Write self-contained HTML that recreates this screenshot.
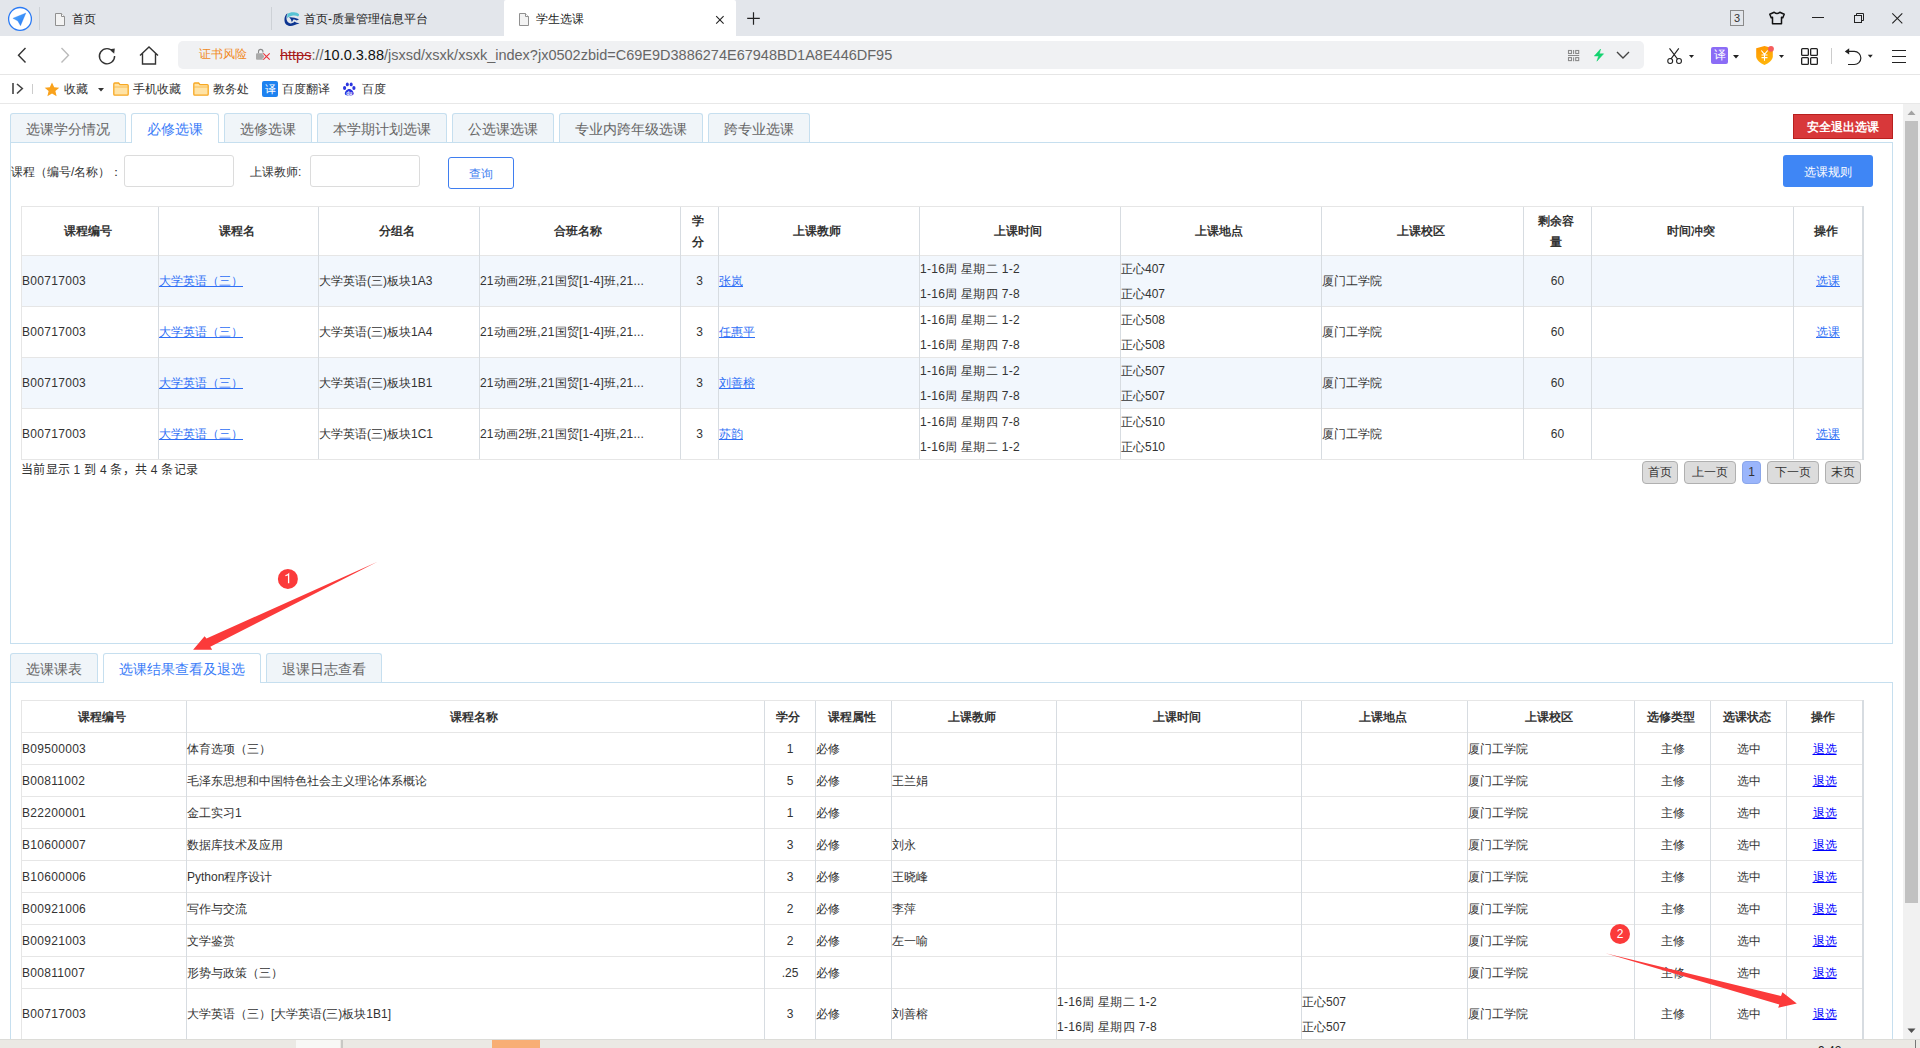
<!DOCTYPE html>
<html><head><meta charset="utf-8">
<style>
*{box-sizing:border-box;margin:0;padding:0}
html,body{width:1920px;height:1048px;overflow:hidden}
body{text-spacing-trim:space-all;position:relative;font-family:"Liberation Sans",sans-serif;font-size:12px;color:#333;background:#fff}
.a{position:absolute}
svg{position:absolute;overflow:visible}
.t{position:absolute;white-space:nowrap;line-height:1}
</style></head><body>
<!-- ===== TAB STRIP ===== -->
<div class="a" style="left:0;top:0;width:1920px;height:36px;background:#e3e6eb"></div>
<!-- browser logo -->
<svg style="left:0;top:0" width="40" height="36">
<defs><linearGradient id="lg1" x1="0" y1="0" x2="1" y2="1"><stop offset="0" stop-color="#55b0ff"/><stop offset="1" stop-color="#2474f2"/></linearGradient></defs>
<circle cx="20" cy="18.9" r="11.4" fill="#fff" stroke="#2a7af4" stroke-width="1.3"/>
<path d="M12.9 18.3 L25.9 13 L20.5 25.8 L17.8 20.9 Z" fill="url(#lg1)" stroke="#2a7af4" stroke-width="0.3" stroke-linejoin="round"/>
</svg>
<div class="a" style="left:39px;top:7px;width:1px;height:23px;background:#cdd1d6"></div>
<!-- tab1 -->
<svg style="left:54px;top:13px" width="14" height="14"><path d="M1.5 0.5 H7.5 L10.5 3.5 V12.5 H1.5 Z" fill="#f3f3f3" stroke="#909090" stroke-width="1"/><path d="M7.5 0.5 V3.5 H10.5" fill="#fff" stroke="#909090" stroke-width="1"/></svg>
<div class="t" style="left:72px;top:13px;font-size:12px;color:#222">首页</div>
<div class="a" style="left:271px;top:7px;width:1px;height:23px;background:#cdd1d6"></div>
<!-- tab2 -->
<svg style="left:280px;top:6px" width="24" height="24">
<path d="M7.5 7.8 C9 6.6 11.5 6 14 6.2 C16 6.3 18 7 19 8.2 C19.2 9.2 18.8 10 18 10.4 C16.5 9.6 14.5 9.2 12 9.8 C10 10.2 8 11 7 12.5 Z" fill="#58c3d4"/>
<path d="M7.5 7.2 C3.8 9.5 3.5 16.5 6.5 18.8 C9 20.5 12 20.3 14 19.3 C15.8 18.5 17.5 18 19.5 17.6 C17.5 17 15.8 16.6 14.6 15.6 L13.6 16.6 C11.5 18 8.6 17.6 7.4 15.6 C6 13 6.3 10 7.5 7.2 Z" fill="#0d3591"/>
<path d="M9 11.3 C12.5 11 15.5 12 19 13.3 L16.8 14.6 C15.3 14 14.3 13.5 13.3 13.6 C12.8 14.6 12.3 15.5 11.8 16.2 C11.6 14.6 10.6 12.6 9 11.3 Z" fill="#0d3591"/>
</svg>
<div class="t" style="left:304px;top:13px;font-size:12px;color:#222">首页-质量管理信息平台</div>
<!-- active tab -->
<div class="a" style="left:504px;top:0;width:232px;height:36px;background:#fff;border-radius:2px 2px 0 0"></div>
<svg style="left:518px;top:13px" width="14" height="14"><path d="M1.5 0.5 H7.5 L10.5 3.5 V12.5 H1.5 Z" fill="#f3f3f3" stroke="#909090" stroke-width="1"/><path d="M7.5 0.5 V3.5 H10.5" fill="#fff" stroke="#909090" stroke-width="1"/></svg>
<div class="t" style="left:536px;top:13px;font-size:12px;color:#222">学生选课</div>
<svg style="left:715px;top:15px" width="10" height="10"><path d="M1.2 1.2 L8.6 8.6 M8.6 1.2 L1.2 8.6" stroke="#222" stroke-width="1.1"/></svg>
<svg style="left:747px;top:12px" width="14" height="14"><path d="M6.5 0.3 V12.7 M0.2 6.3 H12.8" stroke="#222" stroke-width="1.2"/></svg>
<!-- window controls -->
<div class="a" style="left:1730px;top:10px;width:14px;height:16px;border:1px solid #8a8a8a;font-size:11px;line-height:14px;text-align:center;color:#333">3</div>
<svg style="left:1769px;top:11px" width="17" height="14"><path d="M5.2 1.2 Q8 3.8 10.8 1.2 L15.2 3.2 L13.8 6.8 L12.5 6.3 V12.8 H3.5 V6.3 L2.2 6.8 L0.8 3.2 Z" fill="none" stroke="#111" stroke-width="1.5" stroke-linejoin="round"/></svg>
<div class="a" style="left:1812px;top:17px;width:12px;height:1px;background:#222"></div>
<svg style="left:1853px;top:12px" width="12" height="12"><rect x="1.5" y="3.5" width="7" height="7" fill="none" stroke="#222"/><path d="M3.5 3 V1.5 H10.5 V8.5 H9" fill="none" stroke="#222"/></svg>
<svg style="left:1892px;top:13px" width="11" height="11"><path d="M0.3 0.3 L10.3 10.3 M10.3 0.3 L0.3 10.3" stroke="#222" stroke-width="1.1"/></svg>

<!-- ===== ADDRESS BAR ===== -->
<div class="a" style="left:0;top:36px;width:1920px;height:39px;background:#fff;border-bottom:1px solid #e6e6e6"></div>
<svg style="left:17px;top:47px" width="10" height="17"><path d="M8.5 1 L1.5 8.2 L8.5 15.5" fill="none" stroke="#333" stroke-width="1.4"/></svg>
<svg style="left:60px;top:47px" width="10" height="17"><path d="M1.5 1 L8.5 8.2 L1.5 15.5" fill="none" stroke="#bbb" stroke-width="1.4"/></svg>
<svg style="left:98px;top:47px" width="18" height="18"><path d="M15.2 4.8 A7.6 7.6 0 1 0 16.6 9" fill="none" stroke="#333" stroke-width="1.4"/><path d="M11.6 2.2 L16.8 1.6 L16.2 6.8 Z" fill="#333"/></svg>
<svg style="left:139px;top:46px" width="20" height="19"><path d="M1 9.5 L10 1 L19 9.5 M3.5 7.5 V18 H16.5 V7.5" fill="none" stroke="#333" stroke-width="1.4" stroke-linejoin="miter"/></svg>
<div class="a" style="left:178px;top:41px;width:1466px;height:28px;background:#f0f1f3;border-radius:5px"></div>
<div class="t" style="left:199px;top:48px;font-size:12px;color:#f08a24">证书风险</div>
<svg style="left:255px;top:48px" width="17" height="14"><path d="M3.5 5.5 V3.6 A2.2 2.2 0 0 1 7.9 3.6 V4.6" fill="none" stroke="#8c8c8c" stroke-width="1.1"/><rect x="1" y="5.2" width="8" height="6.6" rx="1" fill="#aaa"/><path d="M8.3 5.3 L14.7 11.7 M14.7 5.3 L8.3 11.7" stroke="#f0f1f3" stroke-width="2.6"/><path d="M8.3 5.3 L14.7 11.7 M14.7 5.3 L8.3 11.7" stroke="#e8333a" stroke-width="1.1"/></svg>
<div class="t" id="url" style="left:280px;top:48px;font-size:14.5px;color:#666"><span style="color:#a81a1a;text-decoration:line-through">https</span>://<span style="color:#111">10.0.3.88</span>/jsxsd/xsxk/xsxk_index?jx0502zbid=C69E9D3886274E67948BD1A8E446DF95</div>
<svg style="left:1567px;top:49px" width="13" height="13"><g fill="none" stroke="#8a8a8a" stroke-width="1.1"><rect x="1.5" y="1.5" width="3" height="3"/><rect x="8.7" y="1.5" width="3" height="3"/><rect x="1.5" y="8.6" width="3" height="3"/><rect x="8.7" y="8.6" width="3" height="3"/><path d="M6.6 1 V5 M6.6 8.2 V12.2 M1 6.5 H12.2"/></g></svg>
<svg style="left:1593px;top:48px" width="12" height="14"><path d="M7.6 1 L1.3 8 H5.6 L3.9 13.2 L10.6 5.8 H6.4 Z" fill="#12d36f" stroke="#12d36f" stroke-width="0.5" stroke-linejoin="round"/></svg>
<svg style="left:1616px;top:51px" width="14" height="8"><path d="M1 1 L7 7 L13 1" fill="none" stroke="#444" stroke-width="1.4"/></svg>
<!-- toolbar icons -->
<svg style="left:1665px;top:47px" width="32" height="18">
<path d="M4.5 1.3 L12.6 12.2 M13.8 1.3 L5.8 12.2" stroke="#222" stroke-width="1.1" fill="none"/>
<circle cx="5.2" cy="14" r="2.45" fill="none" stroke="#222" stroke-width="1.1"/><circle cx="14" cy="14" r="2.45" fill="none" stroke="#222" stroke-width="1.1"/>
<path d="M24 8 H29 L26.5 11 Z" fill="#222"/></svg>
<div class="a" style="left:1711px;top:47px;width:17px;height:17px;background:#8b6cf6;border-radius:2px;color:#fff;font-size:12px;line-height:17px;text-align:center">译</div>
<svg style="left:1733px;top:55px" width="7" height="4"><path d="M0 0 H6 L3 3.5 Z" fill="#222"/></svg>
<svg style="left:1755px;top:45px" width="32" height="22">
<defs><linearGradient id="lg2" x1="0" y1="0" x2="0.3" y2="1"><stop offset="0" stop-color="#ff9500"/><stop offset="1" stop-color="#ffb40a"/></linearGradient></defs>
<path d="M9.5 1 L17.8 3.2 V11.5 C17.8 15 13.5 18.3 9.5 20 C5.5 18.3 1.2 15 1.2 11.5 V3.2 Z" fill="url(#lg2)"/>
<path d="M6.3 5.5 L9.5 9.3 L12.7 5.5 M9.5 9.3 V15.8 M6.5 10 H12.5 M6.5 12.6 H12.5" stroke="#fff" stroke-width="1.1" fill="none"/>
<circle cx="16" cy="3.8" r="2.9" fill="#f55d5d"/>
<path d="M24 10 H29 L26.5 13 Z" fill="#222"/></svg>
<svg style="left:1801px;top:48px" width="18" height="18"><g fill="none" stroke="#222" stroke-width="1.3"><rect x="0.65" y="0.65" width="6.7" height="6.7" rx="0.9"/><rect x="9.65" y="0.65" width="6.7" height="6.7" rx="0.9"/><rect x="0.65" y="9.65" width="6.7" height="6.7" rx="0.9"/><rect x="9.65" y="9.65" width="6.7" height="6.7" rx="0.9"/></g></svg>
<div class="a" style="left:1831px;top:48px;width:1px;height:16px;background:#ccc"></div>
<svg style="left:1844px;top:48px" width="32" height="18">
<path d="M4.5 3.4 H10.3 A6.55 6.55 0 0 1 10.3 16.5 H4" fill="none" stroke="#222" stroke-width="1.2"/><path d="M0.8 3.4 L5.2 0.3 V6.5 Z" fill="#222"/>
<path d="M23.8 6.8 H28.8 L26.3 9.8 Z" fill="#222"/></svg>
<svg style="left:1892px;top:49px" width="15" height="15"><path d="M0 1.5 H14 M0 7.5 H14 M0 13.5 H14" stroke="#222" stroke-width="1.2"/></svg>

<!-- ===== BOOKMARK BAR ===== -->
<div class="a" style="left:0;top:75px;width:1920px;height:29px;background:#fff;border-bottom:1px solid #e8e8e8"></div>
<svg style="left:11px;top:83px" width="13" height="12"><path d="M2 0 V11 M6 1 L11.3 5.5 L6 10.5" fill="none" stroke="#444" stroke-width="1.6"/></svg>
<div class="a" style="left:32px;top:84px;width:1px;height:10px;background:#ccc"></div>
<svg style="left:44px;top:82px" width="16" height="15"><path d="M8 0.5 L10.2 5.3 L15.3 5.7 L11.4 9 L12.6 14.2 L8 11.4 L3.4 14.2 L4.6 9 L0.7 5.7 L5.8 5.3 Z" fill="#f9a21c"/></svg>
<div class="t" style="left:64px;top:83px;font-size:12px;color:#333">收藏</div>
<svg style="left:98px;top:88px" width="7" height="4"><path d="M0 0 H6 L3 3.5 Z" fill="#333"/></svg>
<svg style="left:113px;top:81.5px" width="17" height="15"><path d="M0.8 2 Q0.8 1 1.8 1 H5.6 L7 2.6 H14.3 Q15.2 2.6 15.2 3.5 V12.3 Q15.2 13.2 14.3 13.2 H1.7 Q0.8 13.2 0.8 12.3 Z" fill="#ffe3a6" stroke="#f7a823" stroke-width="1.3"/><path d="M0.8 5 H15.2" stroke="#f7b949" stroke-width="0.9"/></svg>
<div class="t" style="left:133px;top:83px;font-size:12px;color:#333">手机收藏</div>
<svg style="left:193px;top:81.5px" width="17" height="15"><path d="M0.8 2 Q0.8 1 1.8 1 H5.6 L7 2.6 H14.3 Q15.2 2.6 15.2 3.5 V12.3 Q15.2 13.2 14.3 13.2 H1.7 Q0.8 13.2 0.8 12.3 Z" fill="#ffe3a6" stroke="#f7a823" stroke-width="1.3"/><path d="M0.8 5 H15.2" stroke="#f7b949" stroke-width="0.9"/></svg>
<div class="t" style="left:213px;top:83px;font-size:12px;color:#333">教务处</div>
<div class="a" style="left:262px;top:81px;width:16px;height:16px;background:#1e82f0;border-radius:2px;color:#fff;font-size:11px;line-height:16px;text-align:center">译</div>
<div class="t" style="left:282px;top:83px;font-size:12px;color:#333">百度翻译</div>
<svg style="left:342px;top:81.5px" width="15" height="15"><g fill="#2b35e0"><ellipse cx="2.6" cy="6" rx="1.6" ry="2"/><ellipse cx="5.3" cy="2.4" rx="1.5" ry="1.9"/><ellipse cx="9.2" cy="2.4" rx="1.5" ry="1.9"/><ellipse cx="11.9" cy="6" rx="1.6" ry="2"/><path d="M7.25 7 C5 7 2.8 9.8 2.8 11.6 C2.8 13.2 4.5 13.6 7.25 13.3 C10 13.6 11.7 13.2 11.7 11.6 C11.7 9.8 9.5 7 7.25 7 Z"/></g><text x="7.3" y="12.6" font-size="5" fill="#fff" text-anchor="middle" font-family="Liberation Sans" font-weight="bold">du</text></svg>
<div class="t" style="left:362px;top:83px;font-size:12px;color:#333">百度</div>

<div class="a" style="left:1903px;top:104px;width:17px;height:935px;background:#f1f1f1"></div>
<svg style="left:1907px;top:110px" width="9" height="6"><path d="M0.5 5 L4.5 0.5 L8.5 5 Z" fill="#a3a3a3"/></svg>
<svg style="left:1907px;top:1028px" width="9" height="6"><path d="M0.5 0.5 L4.5 5 L8.5 0.5 Z" fill="#505050"/></svg>
<div class="a" style="left:1905px;top:121px;width:13px;height:782px;background:#c1c1c1"></div>
<div class="a" style="left:10px;top:142px;width:1883px;height:502px;border:1px solid #c6dfef;background:#fff"></div>
<div class="a" style="left:10px;top:113px;width:116px;height:29px;background:#f0f5f9;border:1px solid #c6dfef;border-bottom:none;border-radius:3px 3px 0 0"></div>
<div class="t" style="left:10px;top:122px;width:116px;text-align:center;font-size:14px;color:#666">选课学分情况</div>
<div class="a" style="left:131px;top:113px;width:88px;height:30px;background:#fff;border:1px solid #c6dfef;border-bottom:none;border-radius:3px 3px 0 0"></div>
<div class="t" style="left:131px;top:122px;width:88px;text-align:center;font-size:14px;color:#3a7cf8">必修选课</div>
<div class="a" style="left:224px;top:113px;width:88px;height:29px;background:#f0f5f9;border:1px solid #c6dfef;border-bottom:none;border-radius:3px 3px 0 0"></div>
<div class="t" style="left:224px;top:122px;width:88px;text-align:center;font-size:14px;color:#666">选修选课</div>
<div class="a" style="left:317px;top:113px;width:130px;height:29px;background:#f0f5f9;border:1px solid #c6dfef;border-bottom:none;border-radius:3px 3px 0 0"></div>
<div class="t" style="left:317px;top:122px;width:130px;text-align:center;font-size:14px;color:#666">本学期计划选课</div>
<div class="a" style="left:452px;top:113px;width:102px;height:29px;background:#f0f5f9;border:1px solid #c6dfef;border-bottom:none;border-radius:3px 3px 0 0"></div>
<div class="t" style="left:452px;top:122px;width:102px;text-align:center;font-size:14px;color:#666">公选课选课</div>
<div class="a" style="left:559px;top:113px;width:144px;height:29px;background:#f0f5f9;border:1px solid #c6dfef;border-bottom:none;border-radius:3px 3px 0 0"></div>
<div class="t" style="left:559px;top:122px;width:144px;text-align:center;font-size:14px;color:#666">专业内跨年级选课</div>
<div class="a" style="left:708px;top:113px;width:102px;height:29px;background:#f0f5f9;border:1px solid #c6dfef;border-bottom:none;border-radius:3px 3px 0 0"></div>
<div class="t" style="left:708px;top:122px;width:102px;text-align:center;font-size:14px;color:#666">跨专业选课</div>
<div class="a" style="left:1793px;top:114px;width:100px;height:25px;background:#d8383a;border:1px solid #b8201f;color:#fff;font-weight:bold;font-size:12px;line-height:25px;text-align:center">安全退出选课</div>
<div class="t" style="left:11px;top:166px;font-size:12px;color:#333">课程（编号/名称）：</div>
<div class="a" style="left:124px;top:155px;width:110px;height:32px;border:1px solid #dcdcdc;border-radius:3px;background:#fff"></div>
<div class="t" style="left:250px;top:166px;font-size:12px;color:#333">上课教师:</div>
<div class="a" style="left:310px;top:155px;width:110px;height:32px;border:1px solid #dcdcdc;border-radius:3px;background:#fff"></div>
<div class="a" style="left:448px;top:157px;width:66px;height:32px;border:1px solid #3f7ef0;border-radius:3px;background:#fff;color:#3f7ef0;font-size:12px;line-height:32px;text-align:center">查询</div>
<div class="a" style="left:1783px;top:155px;width:90px;height:32px;background:#3f86f5;border-radius:3px;color:#fff;font-size:12px;line-height:34px;text-align:center">选课规则</div>
<div class="a" style="left:21px;top:255px;width:1841px;height:51px;background:#f2f7fd"></div>
<div class="a" style="left:21px;top:357px;width:1841px;height:51px;background:#f2f7fd"></div>
<div class="a" style="left:21px;top:206px;width:1842px;height:1px;background:#e6e6e6"></div>
<div class="a" style="left:21px;top:255px;width:1842px;height:1px;background:#e6e6e6"></div>
<div class="a" style="left:21px;top:306px;width:1842px;height:1px;background:#e6e6e6"></div>
<div class="a" style="left:21px;top:357px;width:1842px;height:1px;background:#e6e6e6"></div>
<div class="a" style="left:21px;top:408px;width:1842px;height:1px;background:#e6e6e6"></div>
<div class="a" style="left:21px;top:459px;width:1842px;height:1px;background:#e6e6e6"></div>
<div class="a" style="left:21px;top:206px;width:1px;height:254px;background:#e6e6e6"></div>
<div class="a" style="left:158px;top:207px;width:1px;height:252px;background:#d7dce1"></div>
<div class="a" style="left:318px;top:207px;width:1px;height:252px;background:#d7dce1"></div>
<div class="a" style="left:479px;top:207px;width:1px;height:252px;background:#d7dce1"></div>
<div class="a" style="left:680px;top:207px;width:1px;height:252px;background:#d7dce1"></div>
<div class="a" style="left:718px;top:207px;width:1px;height:252px;background:#d7dce1"></div>
<div class="a" style="left:919px;top:207px;width:1px;height:252px;background:#d7dce1"></div>
<div class="a" style="left:1120px;top:207px;width:1px;height:252px;background:#d7dce1"></div>
<div class="a" style="left:1321px;top:207px;width:1px;height:252px;background:#d7dce1"></div>
<div class="a" style="left:1523px;top:207px;width:1px;height:252px;background:#d7dce1"></div>
<div class="a" style="left:1591px;top:207px;width:1px;height:252px;background:#d7dce1"></div>
<div class="a" style="left:1793px;top:207px;width:1px;height:252px;background:#d7dce1"></div>
<div class="a" style="left:1862px;top:206px;width:2px;height:254px;background:#d7dce1"></div>
<div class="t" style="left:21px;top:207px;width:134px;text-align:center;font-weight:bold;line-height:49px">课程编号</div>
<div class="t" style="left:158px;top:207px;width:157px;text-align:center;font-weight:bold;line-height:49px">课程名</div>
<div class="t" style="left:318px;top:207px;width:158px;text-align:center;font-weight:bold;line-height:49px">分组名</div>
<div class="t" style="left:479px;top:207px;width:198px;text-align:center;font-weight:bold;line-height:49px">合班名称</div>
<div class="t" style="left:680px;top:211px;width:35px;text-align:center;font-weight:bold;line-height:21px;white-space:normal">学<br>分</div>
<div class="t" style="left:718px;top:207px;width:198px;text-align:center;font-weight:bold;line-height:49px">上课教师</div>
<div class="t" style="left:919px;top:207px;width:198px;text-align:center;font-weight:bold;line-height:49px">上课时间</div>
<div class="t" style="left:1120px;top:207px;width:198px;text-align:center;font-weight:bold;line-height:49px">上课地点</div>
<div class="t" style="left:1321px;top:207px;width:199px;text-align:center;font-weight:bold;line-height:49px">上课校区</div>
<div class="t" style="left:1523px;top:211px;width:65px;text-align:center;font-weight:bold;line-height:21px;white-space:normal">剩余容<br>量</div>
<div class="t" style="left:1591px;top:207px;width:199px;text-align:center;font-weight:bold;line-height:49px">时间冲突</div>
<div class="t" style="left:1793px;top:207px;width:66px;text-align:center;font-weight:bold;line-height:49px">操作</div>
<div class="t" style="left:22px;top:256px;width:136px;line-height:51px;text-align:left;letter-spacing:0.3px">B00717003</div>
<div class="t" style="left:159px;top:256px;width:159px;line-height:51px;text-align:left;"><span style="color:#2f6ff5;text-decoration:underline">大学英语（三）</span></div>
<div class="t" style="left:319px;top:256px;width:160px;line-height:51px;text-align:left;">大学英语(三)板块1A3</div>
<div class="t" style="left:480px;top:256px;width:200px;line-height:51px;text-align:left;letter-spacing:0.2px">21动画2班,21国贸[1-4]班,21...</div>
<div class="t" style="left:681px;top:256px;width:37px;line-height:51px;text-align:center;">3</div>
<div class="t" style="left:719px;top:256px;width:200px;line-height:51px;text-align:left;"><span style="color:#2f6ff5;text-decoration:underline">张岚</span></div>
<div class="t" style="left:920px;top:257px;line-height:25px;letter-spacing:0.3px">1-16周 星期二 1-2<br>1-16周 星期四 7-8</div>
<div class="t" style="left:1121px;top:257px;line-height:25px">正心407<br>正心407</div>
<div class="t" style="left:1322px;top:256px;width:201px;line-height:51px;text-align:left;">厦门工学院</div>
<div class="t" style="left:1524px;top:256px;width:67px;line-height:51px;text-align:center;">60</div>
<div class="t" style="left:1794px;top:256px;width:68px;line-height:51px;text-align:center;"><span style="color:#2f6ff5;text-decoration:underline">选课</span></div>
<div class="t" style="left:22px;top:307px;width:136px;line-height:51px;text-align:left;letter-spacing:0.3px">B00717003</div>
<div class="t" style="left:159px;top:307px;width:159px;line-height:51px;text-align:left;"><span style="color:#2f6ff5;text-decoration:underline">大学英语（三）</span></div>
<div class="t" style="left:319px;top:307px;width:160px;line-height:51px;text-align:left;">大学英语(三)板块1A4</div>
<div class="t" style="left:480px;top:307px;width:200px;line-height:51px;text-align:left;letter-spacing:0.2px">21动画2班,21国贸[1-4]班,21...</div>
<div class="t" style="left:681px;top:307px;width:37px;line-height:51px;text-align:center;">3</div>
<div class="t" style="left:719px;top:307px;width:200px;line-height:51px;text-align:left;"><span style="color:#2f6ff5;text-decoration:underline">任惠平</span></div>
<div class="t" style="left:920px;top:308px;line-height:25px;letter-spacing:0.3px">1-16周 星期二 1-2<br>1-16周 星期四 7-8</div>
<div class="t" style="left:1121px;top:308px;line-height:25px">正心508<br>正心508</div>
<div class="t" style="left:1322px;top:307px;width:201px;line-height:51px;text-align:left;">厦门工学院</div>
<div class="t" style="left:1524px;top:307px;width:67px;line-height:51px;text-align:center;">60</div>
<div class="t" style="left:1794px;top:307px;width:68px;line-height:51px;text-align:center;"><span style="color:#2f6ff5;text-decoration:underline">选课</span></div>
<div class="t" style="left:22px;top:358px;width:136px;line-height:51px;text-align:left;letter-spacing:0.3px">B00717003</div>
<div class="t" style="left:159px;top:358px;width:159px;line-height:51px;text-align:left;"><span style="color:#2f6ff5;text-decoration:underline">大学英语（三）</span></div>
<div class="t" style="left:319px;top:358px;width:160px;line-height:51px;text-align:left;">大学英语(三)板块1B1</div>
<div class="t" style="left:480px;top:358px;width:200px;line-height:51px;text-align:left;letter-spacing:0.2px">21动画2班,21国贸[1-4]班,21...</div>
<div class="t" style="left:681px;top:358px;width:37px;line-height:51px;text-align:center;">3</div>
<div class="t" style="left:719px;top:358px;width:200px;line-height:51px;text-align:left;"><span style="color:#2f6ff5;text-decoration:underline">刘善榕</span></div>
<div class="t" style="left:920px;top:359px;line-height:25px;letter-spacing:0.3px">1-16周 星期二 1-2<br>1-16周 星期四 7-8</div>
<div class="t" style="left:1121px;top:359px;line-height:25px">正心507<br>正心507</div>
<div class="t" style="left:1322px;top:358px;width:201px;line-height:51px;text-align:left;">厦门工学院</div>
<div class="t" style="left:1524px;top:358px;width:67px;line-height:51px;text-align:center;">60</div>
<div class="t" style="left:22px;top:409px;width:136px;line-height:51px;text-align:left;letter-spacing:0.3px">B00717003</div>
<div class="t" style="left:159px;top:409px;width:159px;line-height:51px;text-align:left;"><span style="color:#2f6ff5;text-decoration:underline">大学英语（三）</span></div>
<div class="t" style="left:319px;top:409px;width:160px;line-height:51px;text-align:left;">大学英语(三)板块1C1</div>
<div class="t" style="left:480px;top:409px;width:200px;line-height:51px;text-align:left;letter-spacing:0.2px">21动画2班,21国贸[1-4]班,21...</div>
<div class="t" style="left:681px;top:409px;width:37px;line-height:51px;text-align:center;">3</div>
<div class="t" style="left:719px;top:409px;width:200px;line-height:51px;text-align:left;"><span style="color:#2f6ff5;text-decoration:underline">苏韵</span></div>
<div class="t" style="left:920px;top:410px;line-height:25px;letter-spacing:0.3px">1-16周 星期四 7-8<br>1-16周 星期二 1-2</div>
<div class="t" style="left:1121px;top:410px;line-height:25px">正心510<br>正心510</div>
<div class="t" style="left:1322px;top:409px;width:201px;line-height:51px;text-align:left;">厦门工学院</div>
<div class="t" style="left:1524px;top:409px;width:67px;line-height:51px;text-align:center;">60</div>
<div class="t" style="left:1794px;top:409px;width:68px;line-height:51px;text-align:center;"><span style="color:#2f6ff5;text-decoration:underline">选课</span></div>
<div class="t" lang="zh-CN" style="left:21px;top:464px;letter-spacing:0.25px">当前显示 1 到 4 条，共 4 条记录</div>
<div class="a" style="left:1642px;top:461px;width:36px;height:23px;background:#dcdcdc;border:1px solid #b0b0b0;border-radius:4px;color:#333;font-size:12px;line-height:21px;text-align:center">首页</div>
<div class="a" style="left:1684px;top:461px;width:52px;height:23px;background:#dcdcdc;border:1px solid #b0b0b0;border-radius:4px;color:#333;font-size:12px;line-height:21px;text-align:center">上一页</div>
<div class="a" style="left:1742px;top:461px;width:19px;height:23px;background:#9ab5fb;border:1px solid #8aa6ea;border-radius:4px;color:#333;font-size:12px;line-height:21px;text-align:center">1</div>
<div class="a" style="left:1767px;top:461px;width:52px;height:23px;background:#dcdcdc;border:1px solid #b0b0b0;border-radius:4px;color:#333;font-size:12px;line-height:21px;text-align:center">下一页</div>
<div class="a" style="left:1825px;top:461px;width:36px;height:23px;background:#dcdcdc;border:1px solid #b0b0b0;border-radius:4px;color:#333;font-size:12px;line-height:21px;text-align:center">末页</div>
<div class="a" style="left:10px;top:682px;width:1883px;height:400px;border:1px solid #c6dfef;border-bottom:none;background:#fff"></div>
<div class="a" style="left:10px;top:653px;width:88px;height:29px;background:#f0f5f9;border:1px solid #c6dfef;border-bottom:none;border-radius:3px 3px 0 0"></div>
<div class="t" style="left:10px;top:662px;width:88px;text-align:center;font-size:14px;color:#666">选课课表</div>
<div class="a" style="left:103px;top:653px;width:158px;height:30px;background:#fff;border:1px solid #c6dfef;border-bottom:none;border-radius:3px 3px 0 0"></div>
<div class="t" style="left:103px;top:662px;width:158px;text-align:center;font-size:14px;color:#3a7cf8">选课结果查看及退选</div>
<div class="a" style="left:266px;top:653px;width:116px;height:29px;background:#f0f5f9;border:1px solid #c6dfef;border-bottom:none;border-radius:3px 3px 0 0"></div>
<div class="t" style="left:266px;top:662px;width:116px;text-align:center;font-size:14px;color:#666">退课日志查看</div>
<div class="a" style="left:21px;top:700px;width:1842px;height:1px;background:#e6e6e6"></div>
<div class="a" style="left:21px;top:732px;width:1842px;height:1px;background:#e6e6e6"></div>
<div class="a" style="left:21px;top:764px;width:1842px;height:1px;background:#e6e6e6"></div>
<div class="a" style="left:21px;top:796px;width:1842px;height:1px;background:#e6e6e6"></div>
<div class="a" style="left:21px;top:828px;width:1842px;height:1px;background:#e6e6e6"></div>
<div class="a" style="left:21px;top:860px;width:1842px;height:1px;background:#e6e6e6"></div>
<div class="a" style="left:21px;top:892px;width:1842px;height:1px;background:#e6e6e6"></div>
<div class="a" style="left:21px;top:924px;width:1842px;height:1px;background:#e6e6e6"></div>
<div class="a" style="left:21px;top:956px;width:1842px;height:1px;background:#e6e6e6"></div>
<div class="a" style="left:21px;top:988px;width:1842px;height:1px;background:#e6e6e6"></div>
<div class="a" style="left:21px;top:700px;width:1px;height:339px;background:#e6e6e6"></div>
<div class="a" style="left:186px;top:701px;width:1px;height:338px;background:#d7dce1"></div>
<div class="a" style="left:764px;top:701px;width:1px;height:338px;background:#d7dce1"></div>
<div class="a" style="left:815px;top:701px;width:1px;height:338px;background:#d7dce1"></div>
<div class="a" style="left:891px;top:701px;width:1px;height:338px;background:#d7dce1"></div>
<div class="a" style="left:1056px;top:701px;width:1px;height:338px;background:#d7dce1"></div>
<div class="a" style="left:1301px;top:701px;width:1px;height:338px;background:#d7dce1"></div>
<div class="a" style="left:1467px;top:701px;width:1px;height:338px;background:#d7dce1"></div>
<div class="a" style="left:1634px;top:701px;width:1px;height:338px;background:#d7dce1"></div>
<div class="a" style="left:1710px;top:701px;width:1px;height:338px;background:#d7dce1"></div>
<div class="a" style="left:1786px;top:701px;width:1px;height:338px;background:#d7dce1"></div>
<div class="a" style="left:1862px;top:700px;width:2px;height:339px;background:#d7dce1"></div>
<div class="t" style="left:21px;top:701px;width:162px;text-align:center;font-weight:bold;line-height:32px">课程编号</div>
<div class="t" style="left:186px;top:701px;width:575px;text-align:center;font-weight:bold;line-height:32px">课程名称</div>
<div class="t" style="left:764px;top:701px;width:48px;text-align:center;font-weight:bold;line-height:32px">学分</div>
<div class="t" style="left:815px;top:701px;width:73px;text-align:center;font-weight:bold;line-height:32px">课程属性</div>
<div class="t" style="left:891px;top:701px;width:162px;text-align:center;font-weight:bold;line-height:32px">上课教师</div>
<div class="t" style="left:1056px;top:701px;width:242px;text-align:center;font-weight:bold;line-height:32px">上课时间</div>
<div class="t" style="left:1301px;top:701px;width:163px;text-align:center;font-weight:bold;line-height:32px">上课地点</div>
<div class="t" style="left:1467px;top:701px;width:164px;text-align:center;font-weight:bold;line-height:32px">上课校区</div>
<div class="t" style="left:1634px;top:701px;width:73px;text-align:center;font-weight:bold;line-height:32px">选修类型</div>
<div class="t" style="left:1710px;top:701px;width:73px;text-align:center;font-weight:bold;line-height:32px">选课状态</div>
<div class="t" style="left:1786px;top:701px;width:73px;text-align:center;font-weight:bold;line-height:32px">操作</div>
<div class="t" style="left:22px;top:733px;width:164px;line-height:32px;text-align:left;letter-spacing:0.3px">B09500003</div>
<div class="t" style="left:187px;top:733px;width:577px;line-height:32px;text-align:left;">体育选项（三）</div>
<div class="t" style="left:765px;top:733px;width:50px;line-height:32px;text-align:center;">1</div>
<div class="t" style="left:816px;top:733px;width:75px;line-height:32px;text-align:left;">必修</div>
<div class="t" style="left:892px;top:733px;width:164px;line-height:32px;text-align:left;"></div>
<div class="t" style="left:1468px;top:733px;width:166px;line-height:32px;text-align:left;">厦门工学院</div>
<div class="t" style="left:1635px;top:733px;width:75px;line-height:32px;text-align:center;">主修</div>
<div class="t" style="left:1711px;top:733px;width:75px;line-height:32px;text-align:center;">选中</div>
<div class="t" style="left:1787px;top:733px;width:75px;line-height:32px;text-align:center;"><span style="color:#0000ff;text-decoration:underline">退选</span></div>
<div class="t" style="left:22px;top:765px;width:164px;line-height:32px;text-align:left;letter-spacing:0.3px">B00811002</div>
<div class="t" style="left:187px;top:765px;width:577px;line-height:32px;text-align:left;">毛泽东思想和中国特色社会主义理论体系概论</div>
<div class="t" style="left:765px;top:765px;width:50px;line-height:32px;text-align:center;">5</div>
<div class="t" style="left:816px;top:765px;width:75px;line-height:32px;text-align:left;">必修</div>
<div class="t" style="left:892px;top:765px;width:164px;line-height:32px;text-align:left;">王兰娟</div>
<div class="t" style="left:1468px;top:765px;width:166px;line-height:32px;text-align:left;">厦门工学院</div>
<div class="t" style="left:1635px;top:765px;width:75px;line-height:32px;text-align:center;">主修</div>
<div class="t" style="left:1711px;top:765px;width:75px;line-height:32px;text-align:center;">选中</div>
<div class="t" style="left:1787px;top:765px;width:75px;line-height:32px;text-align:center;"><span style="color:#0000ff;text-decoration:underline">退选</span></div>
<div class="t" style="left:22px;top:797px;width:164px;line-height:32px;text-align:left;letter-spacing:0.3px">B22200001</div>
<div class="t" style="left:187px;top:797px;width:577px;line-height:32px;text-align:left;">金工实习1</div>
<div class="t" style="left:765px;top:797px;width:50px;line-height:32px;text-align:center;">1</div>
<div class="t" style="left:816px;top:797px;width:75px;line-height:32px;text-align:left;">必修</div>
<div class="t" style="left:892px;top:797px;width:164px;line-height:32px;text-align:left;"></div>
<div class="t" style="left:1468px;top:797px;width:166px;line-height:32px;text-align:left;">厦门工学院</div>
<div class="t" style="left:1635px;top:797px;width:75px;line-height:32px;text-align:center;">主修</div>
<div class="t" style="left:1711px;top:797px;width:75px;line-height:32px;text-align:center;">选中</div>
<div class="t" style="left:1787px;top:797px;width:75px;line-height:32px;text-align:center;"><span style="color:#0000ff;text-decoration:underline">退选</span></div>
<div class="t" style="left:22px;top:829px;width:164px;line-height:32px;text-align:left;letter-spacing:0.3px">B10600007</div>
<div class="t" style="left:187px;top:829px;width:577px;line-height:32px;text-align:left;">数据库技术及应用</div>
<div class="t" style="left:765px;top:829px;width:50px;line-height:32px;text-align:center;">3</div>
<div class="t" style="left:816px;top:829px;width:75px;line-height:32px;text-align:left;">必修</div>
<div class="t" style="left:892px;top:829px;width:164px;line-height:32px;text-align:left;">刘永</div>
<div class="t" style="left:1468px;top:829px;width:166px;line-height:32px;text-align:left;">厦门工学院</div>
<div class="t" style="left:1635px;top:829px;width:75px;line-height:32px;text-align:center;">主修</div>
<div class="t" style="left:1711px;top:829px;width:75px;line-height:32px;text-align:center;">选中</div>
<div class="t" style="left:1787px;top:829px;width:75px;line-height:32px;text-align:center;"><span style="color:#0000ff;text-decoration:underline">退选</span></div>
<div class="t" style="left:22px;top:861px;width:164px;line-height:32px;text-align:left;letter-spacing:0.3px">B10600006</div>
<div class="t" style="left:187px;top:861px;width:577px;line-height:32px;text-align:left;">Python程序设计</div>
<div class="t" style="left:765px;top:861px;width:50px;line-height:32px;text-align:center;">3</div>
<div class="t" style="left:816px;top:861px;width:75px;line-height:32px;text-align:left;">必修</div>
<div class="t" style="left:892px;top:861px;width:164px;line-height:32px;text-align:left;">王晓峰</div>
<div class="t" style="left:1468px;top:861px;width:166px;line-height:32px;text-align:left;">厦门工学院</div>
<div class="t" style="left:1635px;top:861px;width:75px;line-height:32px;text-align:center;">主修</div>
<div class="t" style="left:1711px;top:861px;width:75px;line-height:32px;text-align:center;">选中</div>
<div class="t" style="left:1787px;top:861px;width:75px;line-height:32px;text-align:center;"><span style="color:#0000ff;text-decoration:underline">退选</span></div>
<div class="t" style="left:22px;top:893px;width:164px;line-height:32px;text-align:left;letter-spacing:0.3px">B00921006</div>
<div class="t" style="left:187px;top:893px;width:577px;line-height:32px;text-align:left;">写作与交流</div>
<div class="t" style="left:765px;top:893px;width:50px;line-height:32px;text-align:center;">2</div>
<div class="t" style="left:816px;top:893px;width:75px;line-height:32px;text-align:left;">必修</div>
<div class="t" style="left:892px;top:893px;width:164px;line-height:32px;text-align:left;">李萍</div>
<div class="t" style="left:1468px;top:893px;width:166px;line-height:32px;text-align:left;">厦门工学院</div>
<div class="t" style="left:1635px;top:893px;width:75px;line-height:32px;text-align:center;">主修</div>
<div class="t" style="left:1711px;top:893px;width:75px;line-height:32px;text-align:center;">选中</div>
<div class="t" style="left:1787px;top:893px;width:75px;line-height:32px;text-align:center;"><span style="color:#0000ff;text-decoration:underline">退选</span></div>
<div class="t" style="left:22px;top:925px;width:164px;line-height:32px;text-align:left;letter-spacing:0.3px">B00921003</div>
<div class="t" style="left:187px;top:925px;width:577px;line-height:32px;text-align:left;">文学鉴赏</div>
<div class="t" style="left:765px;top:925px;width:50px;line-height:32px;text-align:center;">2</div>
<div class="t" style="left:816px;top:925px;width:75px;line-height:32px;text-align:left;">必修</div>
<div class="t" style="left:892px;top:925px;width:164px;line-height:32px;text-align:left;">左一喻</div>
<div class="t" style="left:1468px;top:925px;width:166px;line-height:32px;text-align:left;">厦门工学院</div>
<div class="t" style="left:1635px;top:925px;width:75px;line-height:32px;text-align:center;">主修</div>
<div class="t" style="left:1711px;top:925px;width:75px;line-height:32px;text-align:center;">选中</div>
<div class="t" style="left:1787px;top:925px;width:75px;line-height:32px;text-align:center;"><span style="color:#0000ff;text-decoration:underline">退选</span></div>
<div class="t" style="left:22px;top:957px;width:164px;line-height:32px;text-align:left;letter-spacing:0.3px">B00811007</div>
<div class="t" style="left:187px;top:957px;width:577px;line-height:32px;text-align:left;">形势与政策（三）</div>
<div class="t" style="left:765px;top:957px;width:50px;line-height:32px;text-align:center;">.25</div>
<div class="t" style="left:816px;top:957px;width:75px;line-height:32px;text-align:left;">必修</div>
<div class="t" style="left:892px;top:957px;width:164px;line-height:32px;text-align:left;"></div>
<div class="t" style="left:1468px;top:957px;width:166px;line-height:32px;text-align:left;">厦门工学院</div>
<div class="t" style="left:1635px;top:957px;width:75px;line-height:32px;text-align:center;">主修</div>
<div class="t" style="left:1711px;top:957px;width:75px;line-height:32px;text-align:center;">选中</div>
<div class="t" style="left:1787px;top:957px;width:75px;line-height:32px;text-align:center;"><span style="color:#0000ff;text-decoration:underline">退选</span></div>
<div class="t" style="left:22px;top:989px;width:164px;line-height:51px;text-align:left;letter-spacing:0.3px">B00717003</div>
<div class="t" style="left:187px;top:989px;width:577px;line-height:51px;text-align:left;">大学英语（三）[大学英语(三)板块1B1]</div>
<div class="t" style="left:765px;top:989px;width:50px;line-height:51px;text-align:center;">3</div>
<div class="t" style="left:816px;top:989px;width:75px;line-height:51px;text-align:left;">必修</div>
<div class="t" style="left:892px;top:989px;width:164px;line-height:51px;text-align:left;">刘善榕</div>
<div class="t" style="left:1057px;top:990px;line-height:25px;letter-spacing:0.3px">1-16周 星期二 1-2<br>1-16周 星期四 7-8</div>
<div class="t" style="left:1302px;top:990px;line-height:25px">正心507<br>正心507</div>
<div class="t" style="left:1468px;top:989px;width:166px;line-height:51px;text-align:left;">厦门工学院</div>
<div class="t" style="left:1635px;top:989px;width:75px;line-height:51px;text-align:center;">主修</div>
<div class="t" style="left:1711px;top:989px;width:75px;line-height:51px;text-align:center;">选中</div>
<div class="t" style="left:1787px;top:989px;width:75px;line-height:51px;text-align:center;"><span style="color:#0000ff;text-decoration:underline">退选</span></div>
<svg style="left:0;top:0" width="1920" height="1048"><path d="M377.5 561.8 L206.5 638.6 L204.6 636.2 L193.1 649.8 L212.2 649.8 L210.3 646.7 Z" fill="#fb3a3a"/><circle cx="287.9" cy="578.9" r="10" fill="#fb3a3a"/><path d="M285.4 575.6 Q287.6 575.4 288.6 574.2 V583.2" fill="none" stroke="#fff" stroke-width="1.3"/><path d="M1605.5 953.2 L1781 996 L1782.4 992.2 L1796.8 1003.5 L1778.2 1007.7 L1779.3 1004.4 Z" fill="#fb3a3a"/><circle cx="1620" cy="934" r="10" fill="#fb3a3a"/><text x="1620" y="938.3" font-size="12" fill="#fff" text-anchor="middle" font-family="Liberation Sans">2</text></svg>
<div class="a" style="left:0px;top:1039px;width:1920px;height:9px;background:#ebe9e4;border-top:1px solid #dcdcd8"></div>
<div class="a" style="left:296px;top:1040px;width:44px;height:8px;background:#f8f8f6"></div>
<div class="a" style="left:341px;top:1040px;width:2px;height:8px;background:#c8c8c4"></div>
<div class="a" style="left:492px;top:1040px;width:48px;height:8px;background:#f8ae74"></div>
<div class="a" style="left:1915px;top:1040px;width:1px;height:8px;background:#777"></div>
<div class="t" style="left:1818px;top:1045px;font-size:12px;color:#222">9:42</div>
</body></html>
